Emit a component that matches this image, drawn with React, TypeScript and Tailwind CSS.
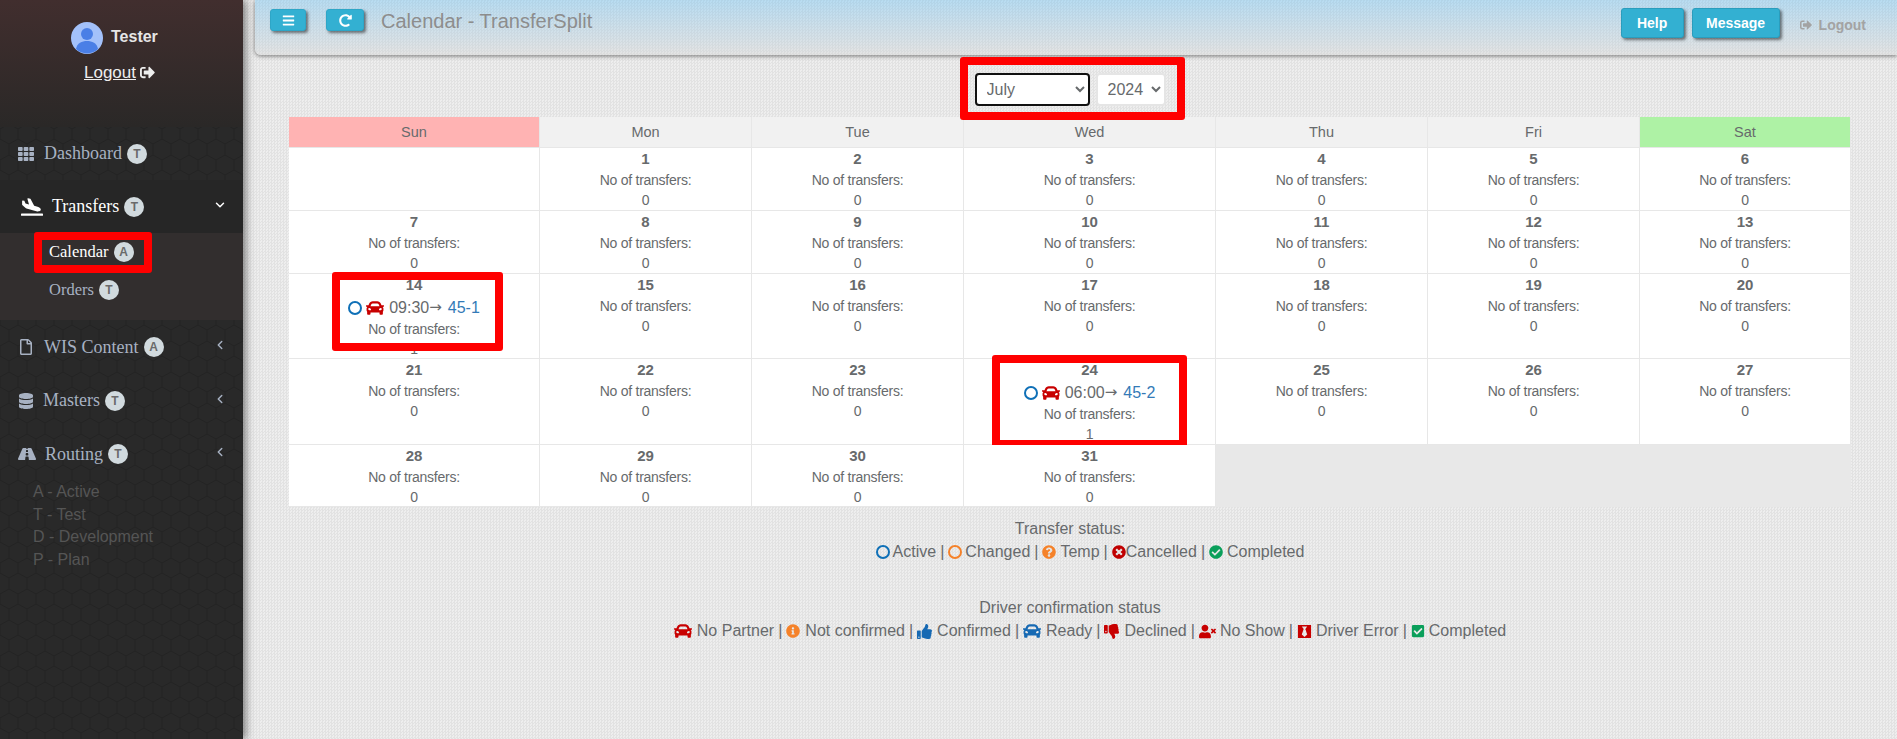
import type { ReactNode } from "react";
import { ChevronDown, ChevronLeft } from "lucide-react";
import {
  FaBars,
  FaBlackTie,
  FaCar,
  FaCheckCircle,
  FaCheckSquare,
  FaDatabase,
  FaInfoCircle,
  FaPlaneArrival,
  FaQuestionCircle,
  FaRedoAlt,
  FaRegFile,
  FaRoad,
  FaSignOutAlt,
  FaTh,
  FaThumbsDown,
  FaThumbsUp,
  FaTimesCircle,
  FaUserTimes,
} from "react-icons/fa";

const DAYS = ["Sun", "Mon", "Tue", "Wed", "Thu", "Fri", "Sat"];

// Trips shown in a calendar cell, keyed by day of month
const TRIPS: Record<number, { time: string; code: string; count: number }> = {
  14: { time: "09:30", code: "45-1", count: 1 },
  24: { time: "06:00", code: "45-2", count: 1 },
};

function Badge({ children }: { children: ReactNode }) {
  return (
    <span className="ml-[5px] flex h-[20px] w-[20px] items-center justify-center rounded-full bg-[#d1dade] font-['Liberation_Sans',sans-serif] text-[12px] font-bold text-[#6a6a6a]">
      {children}
    </span>
  );
}

function Ring({ className }: { className: string }) {
  return <span className={`inline-block h-[14px] w-[14px] rounded-full border-2 ${className}`} />;
}

function NavRow({
  icon,
  label,
  badge,
  gap,
  active,
  open,
  plain,
  className,
}: {
  icon: ReactNode;
  label: string;
  badge: string;
  gap: string;
  active?: boolean;
  open?: boolean;
  plain?: boolean;
  className: string;
}) {
  return (
    <div
      className={`relative flex items-center pl-[18px] pr-[16px] font-['Liberation_Serif',serif] text-[18px] ${className} ${active ? "text-white" : "text-[#a7b1c2]"}`}
    >
      {icon}
      <span className={gap}>{label}</span>
      <Badge>{badge}</Badge>
      {!plain &&
        (open ? (
          <ChevronDown size={14} strokeWidth={2.5} className="ml-auto -translate-y-[2px] text-white" />
        ) : (
          <ChevronLeft size={14} strokeWidth={2.5} className="ml-auto -translate-y-[2px] text-[#a7b1c2]" />
        ))}
    </div>
  );
}

function Sidebar() {
  return (
    <aside className="relative z-10 h-full w-[243px] shrink-0 overflow-hidden bg-[#292929] shadow-[3px_0_8px_rgba(0,0,0,0.45)]">
      <svg className="pointer-events-none absolute inset-0 h-full w-full opacity-40">
        <defs>
          <pattern id="hex" width="18" height="31" patternUnits="userSpaceOnUse">
            <path
              d="M9 0l9 5v10l-9 5-9-5V5zM9 20v11"
              fill="none"
              stroke="#1c1c1c"
              strokeWidth="1"
            />
          </pattern>
        </defs>
        <rect width="100%" height="100%" fill="url(#hex)" />
      </svg>

      <div className="relative">
        {/* Profile */}
        <div className="h-[127px] bg-gradient-to-b from-[#412e2e] to-[#2a2827] pt-[22px] font-['Liberation_Sans',sans-serif]">
          <div className="flex items-center pl-[71px]">
            <svg viewBox="0 0 32 32" className="h-8 w-8">
              <circle cx="16" cy="16" r="16" fill="#a3c1fa" />
              <circle cx="16" cy="12" r="6" fill="#4a7fe6" />
              <path d="M5 27c1-6 6-8 11-8s10 2 11 8a16 16 0 0 1-22 0z" fill="#4a7fe6" />
            </svg>
            <span className="ml-2 -translate-y-px text-[16px] font-bold text-[#e6e6e6]">Tester</span>
          </div>
          <div className="mt-[6px] flex items-center pl-[84px] text-[17px] text-[#eeeeee]">
            <span className="underline">Logout</span>
            <FaSignOutAlt className="ml-[4px] text-[15px]" />
          </div>
        </div>

        <NavRow
          className="h-[53px]"
          icon={<FaTh className="text-[16px]" />}
          label="Dashboard"
          badge="T"
          gap="ml-[10px]"
          plain
        />
        <NavRow
          className="h-[53px] bg-[#262626] pl-[21px]"
          icon={<FaPlaneArrival className="text-[22px]" />}
          label="Transfers"
          badge="T"
          gap="ml-[9px]"
          active
          open
        />

        {/* Submenu */}
        <div className="h-[87px] bg-[#322e2e] pl-[49px] font-['Liberation_Serif',serif] text-[16.5px]">
          <div className="relative flex h-[38px] items-center font-medium text-white">
            <span>Calendar</span>
            <Badge>A</Badge>
            <div className="absolute left-[-15px] top-[-1px] h-[41px] w-[118px] rounded-[3px] border-[8px] border-[#ff0000]" />
          </div>
          <div className="flex h-[38px] items-center text-[#a7b1c2]">
            <span>Orders</span>
            <Badge>T</Badge>
          </div>
        </div>

        <NavRow
          className="mt-0 h-[54px]"
          icon={<FaRegFile className="text-[16px]" />}
          label="WIS Content"
          badge="A"
          gap="ml-[10px]"
        />
        <NavRow
          className="h-[53px]"
          icon={<FaDatabase className="text-[16px]" />}
          label="Masters"
          badge="T"
          gap="ml-[9px]"
        />
        <NavRow
          className="h-[54px]"
          icon={<FaRoad className="text-[18px]" />}
          label="Routing"
          badge="T"
          gap="ml-[9px]"
        />

        <div className="pl-[33px] font-['Liberation_Sans',sans-serif] text-[16px] leading-[22.5px] text-[#555555]">
          <div>A - Active</div>
          <div>T - Test</div>
          <div>D - Development</div>
          <div>P - Plan</div>
        </div>
      </div>
    </aside>
  );
}

function TopBar() {
  const iconBtn =
    "flex h-[22px] items-center justify-center rounded-[3px] border border-[#2ea6c7] bg-[#33b0d2] text-[13px] text-white shadow-[2px_2px_3px_rgba(0,0,0,0.5)]";
  const textBtn =
    "flex h-[30px] items-center justify-center rounded-[3px] border border-[#2a9dbd] bg-[#33b0d2] text-[14px] font-bold text-white shadow-[2px_2px_3px_rgba(0,0,0,0.5)]";

  return (
    <header className="ml-[12px] flex h-[55px] items-start rounded-bl-[6px] bg-[conic-gradient(rgba(0,0,0,0.035)_25%,transparent_0_50%,rgba(0,0,0,0.035)_0_75%,transparent_0),linear-gradient(#b8dcf1,#e4e4e4)] bg-[length:3px_3px,100%_100%] shadow-[0_1px_4px_rgba(0,0,0,0.5)]">
      <button type="button" className={`${iconBtn} ml-[15px] mt-[9px] w-[36px]`}>
        <FaBars />
      </button>
      <button type="button" className={`${iconBtn} ml-[20px] mt-[9px] w-[38px]`}>
        <FaRedoAlt />
      </button>
      <h1 className="ml-[17px] mt-[7px] text-[20px] leading-[28px] font-normal text-[#8d8d8d]">
        Calendar - TransferSplit
      </h1>
      <button type="button" className={`${textBtn} ml-auto mt-[8px] w-[63px]`}>
        Help
      </button>
      <button type="button" className={`${textBtn} ml-[8px] mt-[8px] w-[88px]`}>
        Message
      </button>
      <div className="ml-[20px] mr-[31px] mt-[16px] flex items-center text-[14px] leading-[18px] font-bold text-[#a3a3a3]">
        <FaSignOutAlt className="mr-[7px] text-[12px]" />
        Logout
      </div>
    </header>
  );
}

function DayCell({ day }: { day: number }) {
  const trip = TRIPS[day];
  return (
    <div className="relative border-b border-r border-[#e7e7e7] bg-white text-center text-[14px] leading-[21px] tracking-[-0.25px]">
      <div className="text-[15px] font-bold tracking-normal">{day}</div>
      {trip && (
        <div className="flex h-[23px] items-center justify-center pt-[2px] tracking-normal">
          <Ring className="border-[#0f70b7]" />
          <FaCar className="ml-[4px] text-[18px] text-[#c80000]" />
          <span className="ml-[5px] text-[16px]">{trip.time}</span>
          <span className="font-['DejaVu_Sans',sans-serif] text-[15px] leading-none">→</span>
          <span className="ml-[6px] text-[16px] text-[#337ab7]">{trip.code}</span>
        </div>
      )}
      <div className="pt-[1px]">No of transfers:</div>
      <div className="leading-[19px]">{trip ? trip.count : 0}</div>
      {day === 14 && (
        <div className="absolute left-[43px] top-[-2px] h-[79px] w-[171px] rounded-[3px] border-[8px] border-[#ff0000]" />
      )}
      {day === 24 && (
        <div className="absolute left-[28px] top-[-4px] h-[93px] w-[195px] rounded-[3px] border-[8px] border-[#ff0000]" />
      )}
    </div>
  );
}

function Calendar() {
  const days = Array.from({ length: 31 }, (_, i) => i + 1);

  return (
    <div className="mx-[46px] grid grid-cols-[251px_212px_212px_252px_212px_212px_211px] grid-rows-[31px_63px_63px_85px_86px_62px]">
      {DAYS.map((name) => (
        <div
          key={name}
          className={`flex items-center justify-center border-b border-r border-[#e7e7e7] pt-[1px] text-[14.5px] ${
            name === "Sun" ? "bg-[#ffb3b3]" : name === "Sat" ? "bg-[#aef2a5]" : "bg-[#f1f1f1]"
          }`}
        >
          {name}
        </div>
      ))}
      {/* July 2024 starts on a Monday */}
      <div className="border-b border-r border-[#e7e7e7] bg-white" />
      {days.map((day) => (
        <DayCell key={day} day={day} />
      ))}
      <div className="col-span-3 bg-[#e8e8e8]" />
    </div>
  );
}

function Legends() {
  const sep = <span className="mx-[4px]">|</span>;
  return (
    <div className="text-center text-[16px] leading-[22px]">
      <div className="mt-[11px]">Transfer status:</div>
      <div className="flex items-center justify-center pl-[40px] pt-[1px]">
        <Ring className="mr-[3px] border-[#0f70b7]" />
        Active {sep}
        <Ring className="mr-[3px] border-[#f5822a]" />
        Changed {sep}
        <FaQuestionCircle className="mr-[4px] text-[14px] text-[#f5822a]" />
        Temp {sep}
        <FaTimesCircle className="text-[14px] text-[#c00000]" />
        Cancelled {sep}
        <FaCheckCircle className="mr-[4px] text-[14px] text-[#0a9f5a]" />
        Completed
      </div>
      <div className="mt-[34px]">Driver confirmation status</div>
      <div className="flex items-center justify-center pl-[40px] pt-[1px]">
        <FaCar className="mr-[5px] text-[18px] text-[#c80000]" />
        No Partner {sep}
        <FaInfoCircle className="mr-[5px] text-[14px] text-[#f5822a]" />
        Not confirmed {sep}
        <FaThumbsUp className="mr-[5px] text-[15px] text-[#1669b3]" />
        Confirmed {sep}
        <FaCar className="mr-[5px] text-[18px] text-[#1669b3]" />
        Ready {sep}
        <FaThumbsDown className="mr-[5px] text-[15px] text-[#c80000]" />
        Declined {sep}
        <FaUserTimes className="mr-[4px] text-[17px] text-[#c80000]" />
        No Show {sep}
        <FaBlackTie className="mr-[4px] text-[15px] text-[#c80000]" />
        Driver Error {sep}
        <FaCheckSquare className="mr-[4px] text-[14px] text-[#0a9f5a]" />
        Completed
      </div>
    </div>
  );
}

export default function App() {
  return (
    <div className="flex h-screen overflow-hidden font-['Liberation_Sans',sans-serif] text-[#676a6c]">
      <Sidebar />
      <main className="flex-1 bg-[conic-gradient(#e2e2e2_25%,#eeeeee_0_50%,#e2e2e2_0_75%,#eeeeee_0)] bg-[length:3px_3px]">
        <TopBar />
        <div className="flex h-[62px] items-center justify-center pt-[7px]">
          <div className="relative flex items-center gap-[6px]">
            <select
              defaultValue="July"
              className="h-[33px] w-[115px] rounded-[4px] border-2 border-[#111111] bg-white pl-[6px] text-[16px]"
            >
              <option>June</option>
              <option>July</option>
              <option>August</option>
            </select>
            <select
              defaultValue="2024"
              className="h-[33px] w-[70px] rounded-[4px] border-2 border-[#e5e5e5] bg-white pl-[6px] text-[16px]"
            >
              <option>2023</option>
              <option>2024</option>
              <option>2025</option>
            </select>
            <div className="absolute left-[-15px] top-[-16px] h-[63px] w-[225px] rounded-[3px] border-[8px] border-[#ff0000]" />
          </div>
        </div>
        <Calendar />
        <Legends />
      </main>
    </div>
  );
}
